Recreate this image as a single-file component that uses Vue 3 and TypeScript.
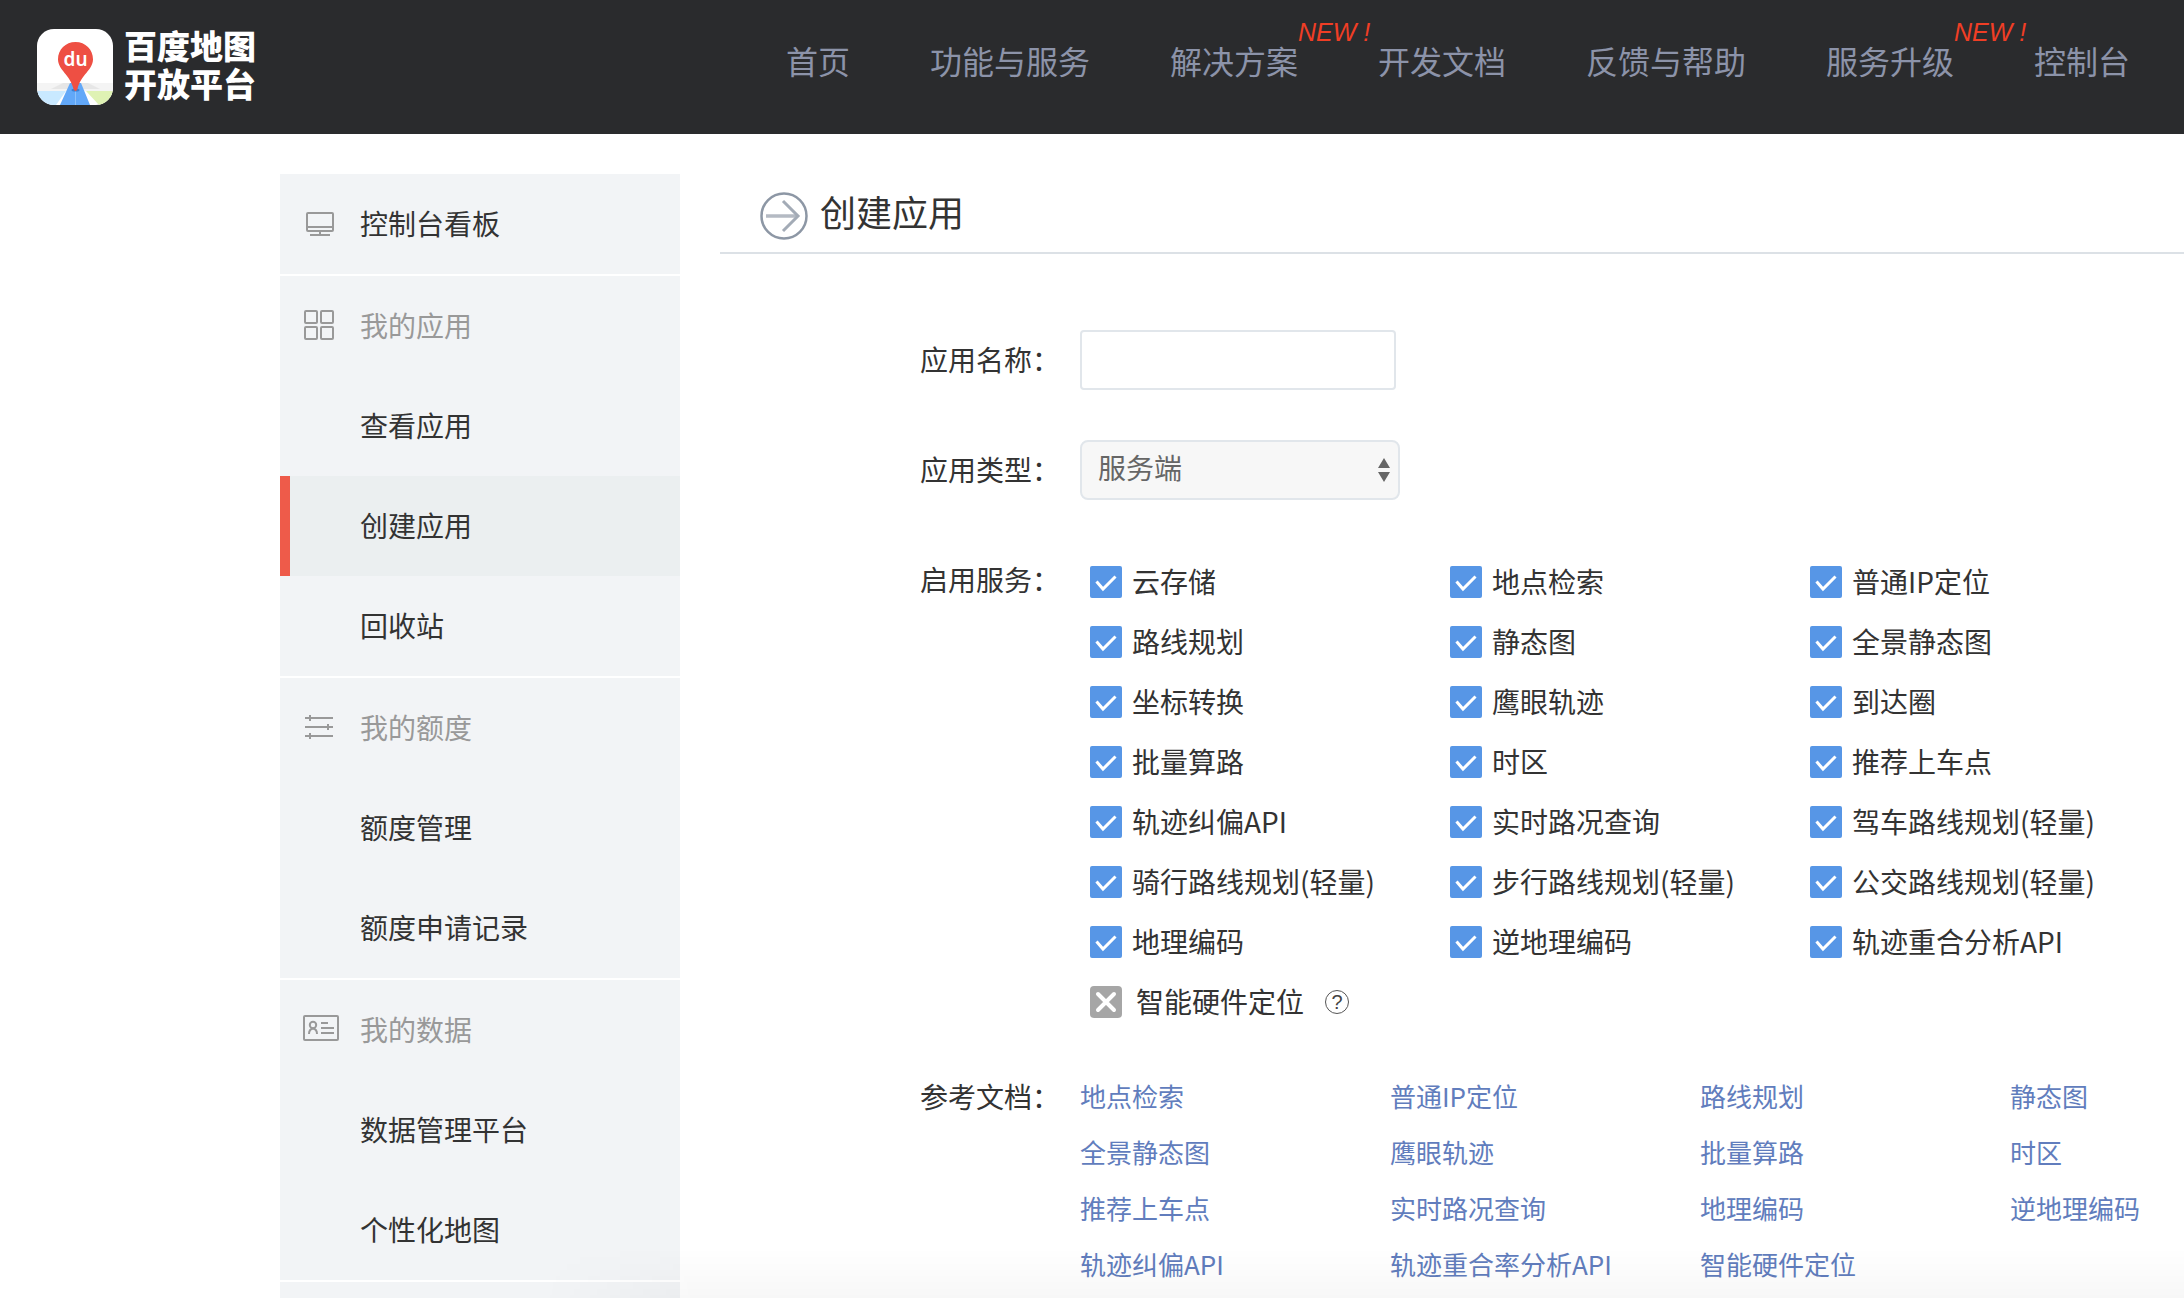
<script setup lang="ts">
import { ref } from 'vue'

interface NavItem { text: string; fresh?: boolean }
interface MenuGroup { title: string; icon: string; link?: boolean; items: string[] }

const nav: NavItem[] = [
  { text: '首页' },
  { text: '功能与服务' },
  { text: '解决方案', fresh: true },
  { text: '开发文档' },
  { text: '反馈与帮助' },
  { text: '服务升级', fresh: true },
  { text: '控制台' },
]

const groups: MenuGroup[] = [
  { title: '控制台看板', icon: 'monitor', link: true, items: [] },
  { title: '我的应用', icon: 'grid', items: ['查看应用', '创建应用', '回收站'] },
  { title: '我的额度', icon: 'sliders', items: ['额度管理', '额度申请记录'] },
  { title: '我的数据', icon: 'card', items: ['数据管理平台', '个性化地图'] },
]
const active = '创建应用'

const services = ref(
  [
    '云存储', '地点检索', '普通IP定位',
    '路线规划', '静态图', '全景静态图',
    '坐标转换', '鹰眼轨迹', '到达圈',
    '批量算路', '时区', '推荐上车点',
    '轨迹纠偏API', '实时路况查询', '驾车路线规划(轻量)',
    '骑行路线规划(轻量)', '步行路线规划(轻量)', '公交路线规划(轻量)',
    '地理编码', '逆地理编码', '轨迹重合分析API',
  ].map((name) => ({ name, on: true })),
)

const docs: string[] = [
  '地点检索', '普通IP定位', '路线规划', '静态图',
  '全景静态图', '鹰眼轨迹', '批量算路', '时区',
  '推荐上车点', '实时路况查询', '地理编码', '逆地理编码',
  '轨迹纠偏API', '轨迹重合率分析API', '智能硬件定位',
]

const appName = ref('')
const appType = ref('服务端')
</script>

<template>
  <div class="page">
    <header class="topbar">
      <a class="brand" href="#">
        <svg class="brand-icon" viewBox="0 0 76 76" aria-hidden="true">
          <defs>
            <clipPath id="tile"><rect width="76" height="76" rx="17" /></clipPath>
          </defs>
          <g clip-path="url(#tile)">
            <rect width="76" height="76" fill="#fff" />
            <path d="M0 54h76v8H0z" fill="#f4f4f4" />
            <path d="M26 54h25l12 6H14z" fill="#e6e6e6" />
            <path d="M0 62h29L19 76H0z" fill="#c9e9ff" />
            <path d="M49 62h27v14H62z" fill="#dff2b4" />
            <path d="M33 54h11l9 22H23z" fill="#62a8f8" />
            <path d="M38.500 62v14" stroke="#8dc2fb" stroke-width="1" />
            <ellipse cx="38.500" cy="61" rx="4" ry="1.500" fill="#3c7fce" />
            <path d="M38.500 13C28.500 13 21 20.700 21 30.200 21 41 33.500 46 36.500 60q2 4 4 0C43.500 46 56 41 56 30.200 56 20.700 48.500 13 38.500 13z" fill="#ee4f43" />
          </g>
          <text x="38.500" y="37" text-anchor="middle" class="brand-du">du</text>
        </svg>
        <span class="brand-name">百度地图<br />开放平台</span>
      </a>
      <nav class="nav">
        <a v-for="n in nav" :key="n.text" href="#" class="nav-link">
          {{ n.text }}<em v-if="n.fresh" class="fresh">NEW !</em>
        </a>
      </nav>
    </header>

    <div class="body">
      <aside class="sidebar">
        <section v-for="g in groups" :key="g.title" class="group">
          <component :is="g.link ? 'a' : 'h2'" :href="g.link ? '#' : undefined" class="item" :class="{ heading: !g.link }">
            <svg class="item-icon" viewBox="0 0 40 40" fill="none" stroke="#999" stroke-width="2" aria-hidden="true">
              <template v-if="g.icon === 'monitor'">
                <rect x="5" y="9" width="26" height="18" rx="1" />
                <path d="M5 23h26M18 27v4M8 31h20" />
              </template>
              <template v-else-if="g.icon === 'grid'">
                <rect x="3" y="5" width="12" height="12" rx="1" />
                <rect x="19" y="5" width="12" height="12" rx="1" />
                <rect x="3" y="21" width="12" height="12" rx="1" />
                <rect x="19" y="21" width="12" height="12" rx="1" />
              </template>
              <template v-else-if="g.icon === 'sliders'">
                <path d="M3 10h28M8 7v6M3 19h28M26 16v6M3 28h28M8 25v6" />
              </template>
              <template v-else>
                <rect x="2" y="6" width="34" height="24" rx="1" />
                <circle cx="11" cy="15" r="3.200" />
                <path d="M7 24c0-3 1-5 4-5.500 3 .5 4 2.500 4 5.500M19 13h7M19 18h13M19 23h13" />
              </template>
            </svg>
            {{ g.title }}
          </component>
          <a v-for="i in g.items" :key="i" href="#" class="item" :class="{ active: i === active }">{{ i }}</a>
        </section>
        <section class="group"><div class="item"></div></section>
      </aside>

      <main class="main">
        <div class="title-bar">
          <svg class="title-icon" viewBox="0 0 48 48" fill="none" aria-hidden="true">
            <circle cx="24" cy="24" r="22.500" stroke="#8d97a5" stroke-width="2.500" />
            <path d="M6 24h31" stroke="#b4bac3" stroke-width="3.500" />
            <path d="M23 9l15 15-15 15" stroke="#a3abb6" stroke-width="3" />
          </svg>
          <h1>创建应用</h1>
        </div>

        <form class="form" @submit.prevent>
          <div class="row">
            <label class="label" for="app-name">应用名称：</label>
            <input id="app-name" v-model="appName" type="text" class="text-input" />
          </div>

          <div class="row">
            <label class="label" for="app-type">应用类型：</label>
            <div class="select-wrap">
              <select id="app-type" v-model="appType" class="select">
                <option>服务端</option>
              </select>
              <svg class="select-arrows" viewBox="0 0 14 26" aria-hidden="true">
                <path d="M7 1l6 10H1zM7 25l6-10H1z" fill="#666" />
              </svg>
            </div>
          </div>

          <div class="row top services-row" role="group" aria-labelledby="svc">
            <span id="svc" class="label">启用服务：</span>
            <div class="services">
              <label v-for="s in services" :key="s.name" class="check">
                <input v-model="s.on" type="checkbox" />
                <svg class="mark" viewBox="0 0 32 32" fill="none" aria-hidden="true">
                  <path d="M6.500 15.500l6.500 7.500L25.500 10.500" stroke="#fff" stroke-width="3" />
                </svg>
                <span class="check-text">{{ s.name }}</span>
              </label>
              <div class="check-line">
                <label class="check off">
                  <input type="checkbox" disabled />
                  <svg class="mark" viewBox="0 0 32 32" fill="none" aria-hidden="true">
                    <path d="M8 8l16 16M24 8L8 24" stroke="#fff" stroke-width="4" stroke-linecap="round" />
                  </svg>
                  <span class="check-text">智能硬件定位</span>
                </label>
                <button type="button" class="help" aria-label="帮助">?</button>
              </div>
            </div>
          </div>

          <div class="row top docs-row">
            <span class="label">参考文档：</span>
            <div class="docs">
              <a v-for="d in docs" :key="d" href="#">{{ d }}</a>
            </div>
          </div>
        </form>
      </main>
    </div>
    <div class="shade"></div>
  </div>
</template>

<style>
body {
  margin: 0;
  background: #fff;
}
</style>

<style scoped>
.page {
  position: relative;
  height: 100vh;
  overflow: hidden;
  font-family: "Noto Sans CJK SC", "Liberation Sans", sans-serif;
  font-size: 28px;
  line-height: 40px;
  color: #333;
}
a {
  color: inherit;
  text-decoration: none;
}
.topbar {
  display: flex;
  justify-content: space-between;
  box-sizing: border-box;
  height: 134px;
  padding: 0 54px 0 37px;
  background: #2a2b2d;
}
.brand {
  display: flex;
  align-items: center;
  gap: 11px;
}
.brand-icon {
  width: 76px;
  height: 76px;
}
.brand-du {
  font: 600 19px "Noto Sans", sans-serif;
  fill: #fff;
}
.brand-name {
  color: #fff;
  font-family: "Liberation Sans", "Noto Sans CJK SC", sans-serif;
  font-size: 33px;
  font-weight: 900;
  line-height: 38px;
}
.nav {
  display: flex;
  gap: 80px;
  padding-top: 36px;
}
.nav-link {
  position: relative;
  height: 48px;
  font-size: 32px;
  line-height: 48px;
  color: #8c93a9;
  white-space: nowrap;
}
.fresh {
  position: absolute;
  left: 100%;
  top: -18px;
  font: italic 25px/28px "Liberation Sans", sans-serif;
  color: #f03e25;
}
.body {
  display: flex;
  gap: 40px;
  padding: 40px 0 0 280px;
}
.sidebar {
  display: flex;
  flex-direction: column;
  flex: none;
  gap: 2px;
  width: 400px;
}
.group {
  background: #f2f4f6;
}
.item {
  display: flex;
  align-items: center;
  box-sizing: border-box;
  height: 100px;
  margin: 0;
  padding: 0 0 3px 80px;
  font-size: 28px;
  font-weight: 400;
}
.item-icon {
  width: 40px;
  height: 40px;
  margin: 3px 18px 0 -58px;
}
.heading {
  color: #999;
}
.active {
  padding-left: 70px;
  border-left: 10px solid #ee5b4a;
  background: #ebeff0;
}
.main {
  flex: 1;
  min-width: 0;
}
.title-bar {
  display: flex;
  gap: 12px;
  height: 60px;
  padding: 18px 0 0 40px;
  border-bottom: 2px solid #dce1e6;
}
.title-icon {
  width: 48px;
  height: 48px;
}
h1 {
  margin: 0;
  font-size: 36px;
  font-weight: 400;
  line-height: 38px;
}
.form {
  display: flex;
  flex-direction: column;
  gap: 50px;
  padding: 76px 0 0 200px;
}
.row {
  display: flex;
  align-items: center;
  gap: 20px;
}
.top {
  align-items: flex-start;
}
.label {
  flex: none;
  width: 140px;
  padding-bottom: 2px;
  white-space: nowrap;
}
.text-input {
  box-sizing: border-box;
  width: 316px;
  height: 60px;
  padding: 0 16px;
  border: 2px solid #e1e6eb;
  border-radius: 4px;
  font: inherit;
  color: inherit;
  background: #fff;
}
.select-wrap {
  position: relative;
  width: 320px;
  height: 60px;
}
.select {
  appearance: none;
  box-sizing: border-box;
  width: 100%;
  height: 60px;
  padding: 0 40px 6px 16px;
  border: 2px solid #e1e6eb;
  border-radius: 8px;
  font: inherit;
  color: #666;
  background: #f7f7f7;
}
.select-arrows {
  position: absolute;
  right: 9px;
  top: 17px;
  width: 14px;
  height: 26px;
  pointer-events: none;
}
.services-row {
  padding-top: 9px;
}
.services {
  display: grid;
  flex: 1;
  grid-template-columns: 360px 360px 1fr;
  grid-auto-rows: 40px;
  row-gap: 20px;
  padding: 3px 0 0 10px;
}
.check {
  position: relative;
  display: flex;
  align-items: center;
  gap: 10px;
  height: 40px;
  white-space: nowrap;
}
.check-text {
  padding-bottom: 2px;
}
.check input {
  appearance: none;
  width: 32px;
  height: 32px;
  margin: 0;
  border-radius: 2px;
  background: #a6a6a6;
}
.check input:checked {
  background: #5796e6;
}
.mark {
  position: absolute;
  left: 0;
  top: 4px;
  width: 32px;
  height: 32px;
}
.check-line {
  display: flex;
  align-items: center;
  gap: 21px;
}
.off {
  gap: 14px;
}
.off input {
  border-radius: 4px;
}
.help {
  box-sizing: border-box;
  width: 24px;
  height: 24px;
  padding: 0;
  border: 1px solid #555;
  border-radius: 50%;
  font: 20px/22px "Liberation Sans", sans-serif;
  color: #444;
  background: none;
}
.docs-row {
  padding-top: 4px;
}
.docs {
  display: grid;
  flex: 1;
  grid-template-columns: 310px 310px 310px 1fr;
  row-gap: 16px;
  font-size: 26px;
  color: #617dbd;
}
.docs a {
  white-space: nowrap;
}
.shade {
  position: absolute;
  left: 540px;
  right: 0;
  bottom: 0;
  height: 50px;
  background: linear-gradient(rgba(0, 0, 0, 0), rgba(0, 0, 0, 0.03));
  mask-image: linear-gradient(to right, transparent, #000 160px);
  pointer-events: none;
}
</style>
